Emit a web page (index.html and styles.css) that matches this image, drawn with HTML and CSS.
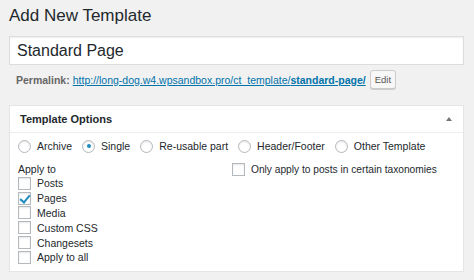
FILE: index.html
```html
<!DOCTYPE html>
<html lang="en">
    <head>
        <meta charset="UTF-8" />
        <meta name="viewport" content="width=device-width, initial-scale=1.0" />
        <title>Add New Template</title>
        <link rel="stylesheet" href="styles.css">
    </head>
    <body>
        <div class="wrap">
            <h1>Add New Template</h1>

            <div class="title-input">Standard Page</div>

            <div class="permalink">
                <strong>Permalink:</strong>
                <a href="#">http://long-dog.w4.wpsandbox.pro/ct_template/<strong>standard-page/</strong></a>
                <span class="button">Edit</span>
            </div>

            <div class="postbox">
                <div class="postbox-header">
                    <h2>Template Options</h2>
                    <span class="toggle"></span>
                </div>
                <div class="inside">
                    <div class="radio-row">
                        <label class="radio"><span class="radio-box"></span>Archive</label>
                        <label class="radio"><span class="radio-box checked"></span>Single</label>
                        <label class="radio"><span class="radio-box"></span>Re-usable part</label>
                        <label class="radio"><span class="radio-box"></span>Header/Footer</label>
                        <label class="radio"><span class="radio-box"></span>Other Template</label>
                    </div>

                    <div class="options">
                        <div class="apply-to">
                            <div class="apply-label">Apply to</div>
                            <label class="check"><span class="check-box"></span>Posts</label>
                            <label class="check"><span class="check-box checked"></span>Pages</label>
                            <label class="check"><span class="check-box"></span>Media</label>
                            <label class="check"><span class="check-box"></span>Custom CSS</label>
                            <label class="check"><span class="check-box"></span>Changesets</label>
                            <label class="check"><span class="check-box"></span>Apply to all</label>
                        </div>
                        <div class="taxonomies">
                            <label class="check"><span class="check-box"></span>Only apply to posts in certain taxonomies</label>
                        </div>
                    </div>
                </div>
            </div>
        </div>
    </body>
</html>
```

FILE: styles.css
```css
:root {
    --background: #f1f1f1;
    --surface: #ffffff;
    --text: #23282d;
    --text-secondary: #666666;
    --link: #0073aa;
    --blue: #1e8cbe;
    --border: #dddddd;
    --control: #b4b9be;
}

* {
    margin: 0;
    padding: 0;
    box-sizing: border-box;
}

body {
    font-family: "Liberation Sans", Arial, sans-serif;
    font-size: 10.5px;
    background-color: var(--background);
    color: var(--text);
    -webkit-font-smoothing: antialiased;
}

.wrap {
    padding: 0 10px 0 9px;
}

h1 {
    font-size: 17px;
    font-weight: 400;
    line-height: 24px;
    padding-top: 4px;
    color: var(--text);
}

.title-input {
    margin-top: 8px;
    height: 29px;
    line-height: 27px;
    padding: 0 7px;
    font-size: 16px;
    background-color: var(--surface);
    border: 1px solid var(--border);
    box-shadow: inset 0 1px 2px rgba(0, 0, 0, 0.07);
}

.permalink {
    display: flex;
    align-items: center;
    gap: 3px;
    height: 19px;
    margin-top: 5px;
    padding-left: 7px;
    font-size: 10.5px;
    color: var(--text-secondary);
}

.permalink a {
    color: var(--link);
}

.permalink a strong {
    font-weight: 700;
}

.button {
    margin-left: 1px;
    height: 19px;
    line-height: 17px;
    padding: 0 4px;
    font-size: 9.5px;
    color: #555555;
    background-color: #f7f7f7;
    border: 1px solid #cccccc;
    border-radius: 3px;
    box-shadow: 0 1px 0 #cccccc;
}

.postbox {
    margin-top: 16px;
    height: 167px;
    background-color: var(--surface);
    border: 1px solid #e5e5e5;
    box-shadow: 0 1px 1px rgba(0, 0, 0, 0.04);
}

.postbox-header {
    display: flex;
    justify-content: space-between;
    align-items: center;
    height: 27px;
    padding: 0 11px 0 10px;
    border-bottom: 1px solid #eeeeee;
}

.postbox-header h2 {
    font-size: 11px;
    font-weight: 700;
}

.toggle {
    width: 0;
    height: 0;
    border-left: 3px solid transparent;
    border-right: 3px solid transparent;
    border-bottom: 4px solid #72777c;
}

.inside {
    padding: 6px 8px;
}

.radio-row {
    display: flex;
    gap: 10px;
    height: 14px;
    align-items: center;
}

.radio,
.check {
    display: flex;
    align-items: center;
    gap: 6px;
}

.radio-box {
    width: 13px;
    height: 13px;
    border: 1px solid var(--control);
    border-radius: 50%;
    box-shadow: inset 0 1px 2px rgba(0, 0, 0, 0.1);
    display: flex;
    align-items: center;
    justify-content: center;
}

.radio-box.checked::after {
    content: "";
    width: 4px;
    height: 4px;
    border-radius: 50%;
    background-color: var(--blue);
}

.options {
    display: grid;
    grid-template-columns: 214px 1fr;
    margin-top: 9px;
}

.apply-label {
    height: 14px;
    line-height: 14px;
}

.apply-to .check {
    height: 14.8px;
}

.check-box {
    width: 13px;
    height: 13px;
    border: 1px solid var(--control);
    box-shadow: inset 0 1px 2px rgba(0, 0, 0, 0.1);
    position: relative;
}

.check-box.checked::after {
    content: "";
    position: absolute;
    left: 3px;
    top: 0;
    width: 4px;
    height: 8px;
    border-right: 2px solid var(--blue);
    border-bottom: 2px solid var(--blue);
    transform: rotate(40deg);
}

.taxonomies .check {
    height: 14px;
    font-size: 10.2px;
}
```
